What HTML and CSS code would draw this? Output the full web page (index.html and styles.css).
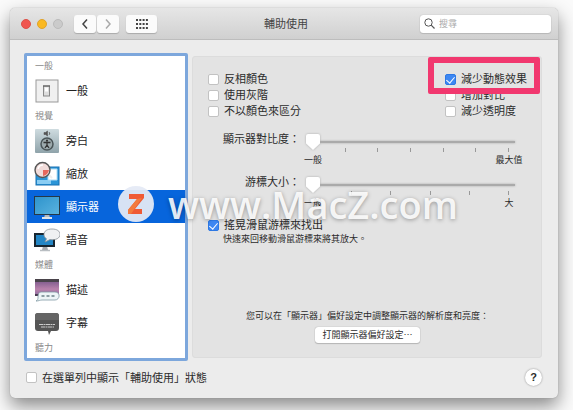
FILE: index.html
```html
<!DOCTYPE html>
<html lang="zh-Hant">
<head>
<meta charset="utf-8">
<meta name="viewport" content="width=device-width, initial-scale=1">
<title>輔助使用</title>
<link rel="stylesheet" href="styles.css">
</head>
<body>
<main class="window">
  <header class="titlebar">
    <div class="tools">
      <div class="lights"><i class="light close"></i><i class="light minimize"></i><i class="light"></i></div>
      <div class="nav">
        <button class="tool" aria-label="上一頁"><svg width="8" height="12" viewBox="0 0 8 12"><path d="M6 1.500 2 6l4 4.500" fill="none" stroke="#444" stroke-width="1.500"/></svg></button>
        <button class="tool" aria-label="下一頁"><svg width="8" height="12" viewBox="0 0 8 12"><path d="M2 1.500 6 6l-4 4.500" fill="none" stroke="#aaa" stroke-width="1.500"/></svg></button>
      </div>
      <button class="tool wide" aria-label="全部顯示"><svg width="13" height="10" viewBox="0 0 13 10"><path d="M1 1h12M1 5h12M1 9h12" stroke="#444" stroke-width="2" stroke-dasharray="2 1.300"/></svg></button>
    </div>
    <h1 class="title">輔助使用</h1>
    <label class="search">
      <svg width="11" height="11" viewBox="0 0 11 11"><circle cx="4.500" cy="4.500" r="3.700" fill="none" stroke="#555"/><path d="m7.200 7.200 3.300 3.300" stroke="#555" stroke-width="1.200"/></svg>
      <input type="search" placeholder="搜尋" aria-label="搜尋">
    </label>
  </header>

  <div class="content">
    <nav class="sidebar">
      <h2 class="group">一般</h2>
      <a class="item" href="#general"><svg class="icon" viewBox="0 0 26 26"><rect x="2" y="2" width="22" height="22" fill="#f0f0f0" stroke="#999"/><rect x="9.500" y="8" width="6" height="10" fill="#ddd" stroke="#888"/><path d="M11 9.500h3v4h-3z" fill="#fff"/><path d="M9 8h7" stroke="#555"/></svg>一般</a>
      <h2 class="group">視覺</h2>
      <a class="item" href="#voiceover"><svg class="icon" viewBox="0 0 26 26"><defs><linearGradient id="steel" x2="0" y2="1"><stop stop-color="#cfdce0"/><stop offset="1" stop-color="#8fa3aa"/></linearGradient></defs><rect x="1" y="1" width="24" height="24" rx="1" fill="url(#steel)"/><path d="M10 4.500h1.500l2-1.500v5l-2-1.500H10zM15 4q1.500 1.500 0 3" fill="#555" stroke="#555" stroke-width=".6"/><circle cx="13" cy="16" r="6" fill="#9daaad" stroke="#4b5558" stroke-width="1.500"/><circle cx="13" cy="12.700" r="1.100" fill="#333"/><path d="M9.500 14.500h7M13 14.500v2.500l-2 3M13 17l2 3" fill="none" stroke="#333" stroke-width="1.300"/></svg>旁白</a>
      <a class="item" href="#zoom"><svg class="icon" viewBox="0 0 26 26"><rect x="2" y="6" width="23" height="18" fill="#2b95d7" stroke="#1870b2"/><path d="M3 19h14v4H3z" fill="#8acdf3"/><path d="M14 8h9v11h-9z" fill="#fff" stroke="#b0dcf5"/><path d="m15 14 3 3" stroke="#eee" stroke-width="2"/><circle cx="8.500" cy="9" r="7.500" fill="#f1dcda" stroke="#555" stroke-width="1.400"/><path d="M9 9h6q-1 5-6 6z" fill="#e6685e"/><path d="M4 8q1-4 5-4" fill="none" stroke="#fff" stroke-width="1.500"/></svg>縮放</a>
      <a class="item selected" href="#display" aria-current="page"><svg class="icon" viewBox="0 0 26 26"><defs><linearGradient id="screen" x2="1" y2="1"><stop stop-color="#2d93cc"/><stop offset="1" stop-color="#5bb3df"/></linearGradient></defs><path d="M11 20h4l1 4H10z" fill="#b5bbc0"/><path d="M8 24h10" stroke="#e1e4e7" stroke-width="2"/><rect x=".5" y="2.500" width="25" height="18" fill="url(#screen)" stroke="#263746"/></svg>顯示器</a>
      <a class="item" href="#speech"><svg class="icon" viewBox="0 0 26 26"><path d="M9 19h4l1 4H8z" fill="#a4a9ad"/><path d="M6 23.500h10" stroke="#b9bec2" stroke-width="1.500"/><rect x="1" y="7" width="19" height="12" fill="#2386c5" stroke="#172630" stroke-width="2"/><path d="M18 2c-5 0-8 2-8 5.500 0 2 1 3.500 2.500 4.200L11 15l5-2.500c6 1 10-1.500 10-5S23 2 18 2z" fill="#eff1f2" stroke="#8b9398" stroke-width=".8"/></svg>語音</a>
      <h2 class="group">媒體</h2>
      <a class="item" href="#descriptions"><svg class="icon" viewBox="0 0 26 26"><defs><linearGradient id="dusk" x2="0" y2="1"><stop stop-color="#705285"/><stop offset=".6" stop-color="#ba82ac"/><stop offset="1" stop-color="#8a6a9e"/></linearGradient></defs><path d="M1 2h24v17H1z" fill="url(#dusk)"/><path d="M1 2h24v3H1z" fill="#49434a"/><path d="M1 17h24v2H1z" fill="#4a3b52"/><path d="M7 15h14c6 0 5 8 0 8H8c-2 0-3 1-6 1 2-1 2-2 2-4 0-3 1-5 3-5z" fill="#edf5f7" stroke="#829ba5" stroke-width=".8"/><path d="M7.500 19h3M12.500 19h3M17.500 19h3" stroke="#6c828b" stroke-width="1.500"/></svg>描述</a>
      <a class="item" href="#captions"><svg class="icon" viewBox="0 0 26 26"><path d="M4 3h18q3 0 3 3v12q0 3-3 3h-5l-2 4-1-4H4q-3 0-3-3V6q0-3 3-3z" fill="#555"/><path d="M4 3h18q3 0 3 3v4H1V6q0-3 3-3z" fill="#656565"/><path d="M5 14.500h16M7 17h13" stroke="#ccc" stroke-width="1.200" stroke-dasharray="4 .5 2 .5"/></svg>字幕</a>
      <h2 class="group">聽力</h2>
    </nav>

    <section class="panel">
      <div class="checks">
        <div class="column">
          <label class="check"><input type="checkbox">反相顏色</label>
          <label class="check"><input type="checkbox">使用灰階</label>
          <label class="check"><input type="checkbox">不以顏色來區分</label>
        </div>
        <div class="column options">
          <label class="check"><input type="checkbox" checked>減少動態效果</label>
          <label class="check"><input type="checkbox">增加對比</label>
          <label class="check"><input type="checkbox">減少透明度</label>
          <div class="highlight"></div>
        </div>
      </div>

      <div class="slider-row">
        <label for="contrast">顯示器對比度：</label>
        <div class="slider">
          <input id="contrast" type="range" min="0" max="6" value="0">
          <div class="ticks"><i></i><i></i><i></i><i></i><i></i><i></i><i></i></div>
          <div class="ends"><span>一般</span><span>最大值</span></div>
        </div>
      </div>
      <div class="slider-row">
        <label for="cursor">游標大小：</label>
        <div class="slider">
          <input id="cursor" type="range" min="0" max="5" value="0">
          <div class="ticks"><i></i><i></i><i></i><i></i><i></i><i></i></div>
          <div class="ends"><span>一般</span><span>大</span></div>
        </div>
      </div>

      <label class="check"><input type="checkbox" checked>搖晃滑鼠游標來找出</label>
      <p class="hint">快速來回移動滑鼠游標來將其放大。</p>

      <div class="more">
        <p>您可以在「顯示器」偏好設定中調整顯示器的解析度和亮度：</p>
        <button class="push">打開顯示器偏好設定⋯</button>
      </div>
    </section>
  </div>

  <footer class="footer">
    <label class="check"><input type="checkbox">在選單列中顯示「輔助使用」狀態</label>
    <button class="help" aria-label="輔助說明">?</button>
  </footer>

  <div class="watermark">
    <svg width="36" height="36" viewBox="0 0 36 36"><circle cx="18" cy="18" r="18" fill="#e4eaf5" fill-opacity=".94"/><path d="M11 8h15v4l-9 11h7v5H10v-4l9-11h-8z" fill="#ef5a35"/><path d="m19 13-9 11v4h3l11-16z" fill="#f37a3c"/></svg>
    <span>www.MacZ.com</span>
  </div>
</main>
</body>
</html>
```
FILE: styles.css
```css
* {
  box-sizing: border-box;
}

body {
  margin: 0;
  min-height: 100vh;
  display: flex;
  padding: 8px 15px 12px 10px;
  overflow: hidden;
  background: #fafafa;
  color: #2b2b2b;
  font: 11px/16px "Liberation Sans", "Noto Sans CJK TC", sans-serif;
}

h1, h2, p {
  margin: 0;
  font-weight: 400;
}

button, input {
  font: inherit;
  color: inherit;
}

.window {
  position: relative;
  flex: 1;
  display: flex;
  flex-direction: column;
  border-radius: 5px;
  background: #ececec;
  box-shadow: 0 0 1px #888, 0 8px 18px rgba(0, 0, 0, .45);
}

.titlebar {
  display: grid;
  grid-template-columns: 1fr auto 1fr;
  align-items: center;
  height: 32px;
  padding: 0 7px 0 11px;
  border-bottom: 1px solid #bdbdbd;
  border-radius: 5px 5px 0 0;
  background: linear-gradient(#e6e6e6, #d0d0d0);
}

.tools, .lights, .nav {
  display: flex;
  align-items: center;
}

.lights {
  gap: 6px;
  margin-right: 11px;
}

.light {
  width: 10px;
  height: 10px;
  border: 1px solid #bbb;
  border-radius: 50%;
  background: #cbcbcb;
}

.close {
  border-color: #dd5148;
  background: #f0554f;
}

.minimize {
  border-color: #e0a32c;
  background: #fab922;
}

.nav {
  gap: 1px;
  margin-right: 7px;
}

.tool {
  display: grid;
  place-items: center;
  width: 22px;
  height: 18px;
  padding: 0;
  border: 0;
  border-radius: 3px;
  background: #fbfbfb;
  box-shadow: 0 1px 1px #aaa;
}

.wide {
  width: 31px;
}

.title {
  font-size: 11px;
  color: #444;
}

.search {
  justify-self: end;
  display: flex;
  align-items: center;
  gap: 4px;
  width: 131px;
  height: 18px;
  padding: 0 4px;
  border-radius: 3px;
  background: #fff;
  box-shadow: 0 0 1px #999, 0 1px 1px #bbb;
}

.search input {
  flex: 1;
  min-width: 0;
  padding: 0;
  border: 0;
  outline: 0;
  background: none;
  font-size: 9px;
}

.search input::placeholder {
  color: #aaa;
}

.content {
  flex: 1;
  display: flex;
  gap: 4px;
  padding: 13px 16px 0 14px;
}

.sidebar {
  width: 164px;
  padding: 1px 0 2px;
  border: 3px solid #7da7dc;
  border-radius: 2px;
  background: #fff;
}

.group {
  height: 17px;
  padding-left: 8px;
  font-size: 9px;
  line-height: 18px;
  color: #888;
}

.item {
  display: flex;
  align-items: center;
  gap: 6px;
  height: 33px;
  padding-left: 7px;
  color: #222;
  text-decoration: none;
}

.selected {
  background: #0765dc;
  color: #fff;
}

.icon {
  width: 26px;
  height: 26px;
}

.panel {
  flex: 1;
  display: flex;
  flex-direction: column;
  margin: 3px 0;
  padding: 14px 14px 14px 15px;
  border: 1px solid #dcdcdc;
  border-radius: 3px;
  background: #e3e3e3;
}

.checks {
  display: flex;
  justify-content: space-between;
  margin-bottom: 12px;
}

.options {
  position: relative;
}

.check {
  display: flex;
  align-items: center;
  gap: 5px;
}

.column .check {
  height: 16px;
}

.check input {
  appearance: none;
  display: grid;
  place-items: center;
  width: 11px;
  height: 11px;
  margin: 0;
  border: 1px solid #c2c2c2;
  border-radius: 2px;
  background: #fff;
}

.check input:checked {
  border-color: #2d78e4;
  background: #3d87f2;
}

.check input:checked::after {
  content: "";
  width: 4px;
  height: 7px;
  border: solid #fff;
  border-width: 0 1px 1px 0;
  transform: rotate(40deg);
}

.highlight {
  position: absolute;
  inset: -14px -13px 25px -17px;
  border: 6px solid #f1386f;
  border-radius: 2px;
  pointer-events: none;
}

.slider-row {
  display: grid;
  grid-template-columns: 92px 1fr;
  gap: 6px;
  height: 43px;
  margin-right: 12px;
}

.slider-row > label {
  text-align: right;
}

.slider {
  padding-top: 3px;
}

.slider input {
  appearance: none;
  display: block;
  width: 100%;
  height: 16px;
  margin: 0;
  background: linear-gradient(#aaa, #aaa) center / 100% 2px no-repeat;
  filter: drop-shadow(0 0 1px #aaa);
}

.slider input::-webkit-slider-thumb {
  appearance: none;
  width: 14px;
  height: 16px;
  background: #fff;
  border-radius: 2px;
  clip-path: polygon(0 0, 100% 0, 100% 60%, 50% 100%, 0 60%);
}

.ticks {
  display: flex;
  justify-content: space-between;
  height: 4px;
  margin-top: -2px;
  padding: 0 6px;
}

.ticks i {
  width: 1px;
  background: #999;
}

.ticks i:first-child {
  visibility: hidden;
}

.ends {
  display: flex;
  justify-content: space-between;
  margin: 1px -8px 0 -7px;
  font-size: 9px;
  line-height: 14px;
}

.ends span {
  width: 28px;
  text-align: center;
}

.hint {
  padding-left: 15px;
  font-size: 9px;
  line-height: 12px;
}

.more {
  display: flex;
  flex-direction: column;
  align-items: center;
  gap: 5px;
  margin-top: auto;
  font-size: 9px;
  line-height: 12px;
}

.push {
  height: 16px;
  padding: 0 7px;
  border: 0;
  border-radius: 3px;
  background: #fff;
  box-shadow: 0 0 1px #888, 0 1px 1px #bbb;
}

.footer {
  display: flex;
  align-items: center;
  justify-content: space-between;
  height: 37px;
  padding: 0 16px 4px;
}

.help {
  width: 17px;
  height: 17px;
  padding: 0;
  border: 0;
  border-radius: 50%;
  background: #fff;
  box-shadow: 0 0 2px #888;
  font-weight: 700;
  line-height: 17px;
}

.watermark {
  position: absolute;
  top: 178px;
  left: 108px;
  display: flex;
  align-items: center;
  gap: 14px;
  color: rgba(255, 255, 255, .9);
  font: 600 38px/36px "Open Sans", sans-serif;
  text-shadow: 0 1px 4px rgba(0, 0, 0, .35);
  pointer-events: none;
}
```
